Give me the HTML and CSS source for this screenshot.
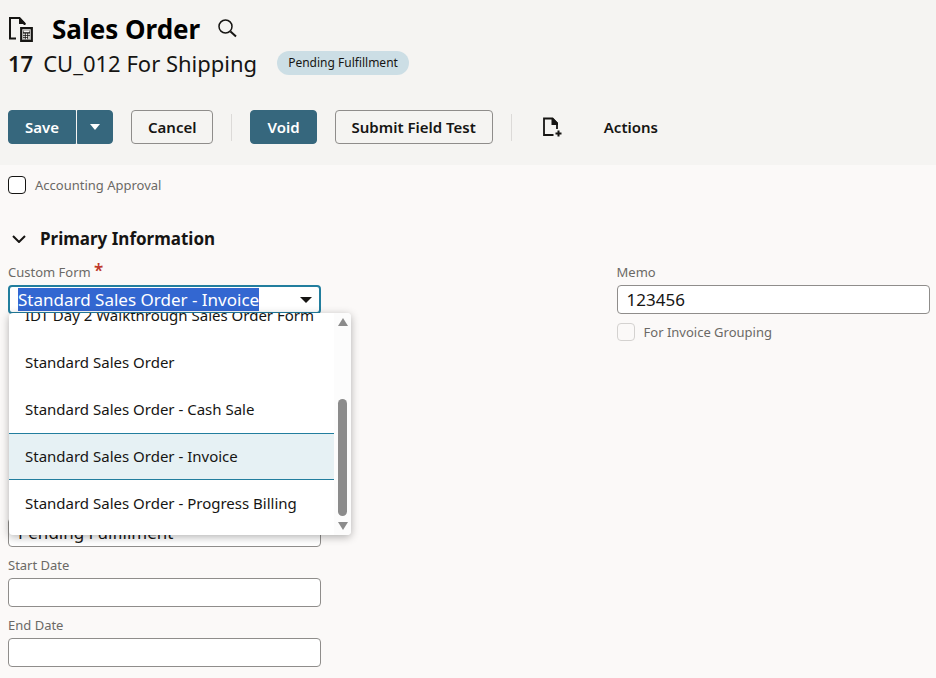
FILE: index.html
```
<!DOCTYPE html>
<html lang="en">
<head>
    <meta charset="UTF-8">
    <meta name="viewport" content="width=device-width, initial-scale=1.0">
    <title>Sales Order</title>
    <link rel="stylesheet" href="styles.css">
</head>
<body>
    <header class="page-header">
        <div class="title-row">
            <svg class="record-icon" width="26" height="28" viewBox="0 0 26 28" aria-hidden="true">
                <path d="M8 23.500H2V3h9.500l5 5.500V10" fill="none" stroke="#161513" stroke-width="2"/>
                <path d="M11 2v7h7z" fill="#161513"/>
                <path d="M13.200 13.200h10.600v12.600H13.200z" fill="none" stroke="#161513" stroke-width="2.200"/>
                <path d="M15 15.500h7v9h-7z" fill="#161513"/>
                <path d="M15.500 15.500h6v1.800h-6zM15.200 18.500h1.600v1.400h-1.600zM17.700 18.500h1.600v1.400h-1.600zM20.200 18.500h1.600v1.400h-1.600zM15.200 20.800h1.600v1.400h-1.600zM17.700 20.800h1.600v1.400h-1.600zM20.200 20.800h1.600v3.400h-1.600zM15.200 23h1.600v1.300h-1.600zM17.700 23h1.600v1.300h-1.600z" fill="#f5f4f2"/>
            </svg>
            <h1>Sales Order</h1>
            <button type="button" class="icon-button" aria-label="Search">
                <svg width="20" height="20" viewBox="0 0 20 20" fill="none" stroke="#161513">
                    <circle cx="7.500" cy="7.500" r="6.500" stroke-width="1.500"/>
                    <path d="M12.500 12.500l5.500 5" stroke-width="2"/>
                </svg>
            </button>
        </div>
        <div class="subtitle-row">
            <span class="record-number">17</span>
            <span class="record-name">CU_012 For Shipping</span>
            <span class="status-badge">Pending Fulfillment</span>
        </div>
        <div class="toolbar">
            <div class="split-button">
                <button type="button" class="btn btn-primary">Save</button>
                <button type="button" class="btn btn-primary btn-arrow" aria-label="More save options">
                    <svg width="10" height="6" viewBox="0 0 10 6"><path d="M0 0h10L5 6z" fill="#fff"/></svg>
                </button>
            </div>
            <button type="button" class="btn">Cancel</button>
            <span class="divider"></span>
            <button type="button" class="btn btn-primary">Void</button>
            <button type="button" class="btn">Submit Field Test</button>
            <span class="divider"></span>
            <button type="button" class="btn btn-plain" aria-label="Create new">
                <svg width="20" height="20" viewBox="0 0 20 20">
                    <path d="M11.500 18H2V1.500h8.500L15 6v6" fill="none" stroke="#161513" stroke-width="1.800"/>
                    <path d="M9.500 1h1.500l5 5v2H9.500z" fill="#161513"/>
                    <path d="M16.500 13.500v6M13.500 16.500h6" stroke="#161513" stroke-width="2"/>
                </svg>
            </button>
            <button type="button" class="btn btn-plain">Actions</button>
        </div>
    </header>

    <main>
        <div class="check-row">
            <input type="checkbox" id="accounting-approval">
            <label for="accounting-approval">Accounting Approval</label>
        </div>

        <h2>
            <svg width="14" height="8" viewBox="0 0 14 8" aria-hidden="true">
                <path d="M1 1l6 6 6-6" fill="none" stroke="#161513" stroke-width="2"/>
            </svg>
            Primary Information
        </h2>

        <div class="form-columns">
            <div class="form-column">
                <div class="field custom-form">
                    <label for="custom-form">Custom Form <span class="required">*</span></label>
                    <div class="combo">
                        <input type="text" id="custom-form" role="combobox" aria-expanded="true" aria-controls="custom-form-list" value="Standard Sales Order - Invoice">
                        <svg width="12" height="6" viewBox="0 0 12 6"><path d="M0 0h12L6 6z" fill="#161513"/></svg>
                    </div>
                    <div class="dropdown">
                        <div class="dropdown-view">
                            <select id="custom-form-list" size="5" aria-label="Custom Form">
                                <option>IDT Day 2 Walkthrough Sales Order Form</option>
                                <option>Standard Sales Order</option>
                                <option>Standard Sales Order - Cash Sale</option>
                                <option selected>Standard Sales Order - Invoice</option>
                                <option>Standard Sales Order - Progress Billing</option>
                            </select>
                        </div>
                        <div class="scrollbar">
                            <svg width="10" height="8" viewBox="0 0 10 8"><path d="M5 0l5 8H0z" fill="#8b8b8b"/></svg>
                            <div class="scrollbar-thumb"></div>
                            <svg width="10" height="8" viewBox="0 0 10 8"><path d="M0 0h10L5 8z" fill="#8b8b8b"/></svg>
                        </div>
                    </div>
                </div>
                <div class="field">
                    <input type="text" aria-label="Status" value="Pending Fulfillment">
                </div>
                <div class="field">
                    <label for="start-date">Start Date</label>
                    <input type="text" id="start-date">
                </div>
                <div class="field">
                    <label for="end-date">End Date</label>
                    <input type="text" id="end-date">
                </div>
            </div>

            <div class="form-column">
                <div class="field">
                    <label for="memo">Memo</label>
                    <input type="text" id="memo" value="123456">
                </div>
                <div class="check-row">
                    <input type="checkbox" id="invoice-grouping" disabled>
                    <label for="invoice-grouping">For Invoice Grouping</label>
                </div>
            </div>
        </div>
    </main>

    <script>
        // The form list opens with its current value selected
        const customForm = document.getElementById('custom-form');
        customForm.focus();
        customForm.select();
    </script>
</body>
</html>
```
FILE: styles.css
```
:root {
    --teal: #36677d;
    --focus: #227e9e;
    --text: #161513;
    --label: #6b6966;
    --border: #8f8d8b;
    --header-bg: #f5f4f2;
    --page-bg: #fbf9f8;
}

* {
    box-sizing: border-box;
}

body {
    margin: 0;
    background-color: var(--page-bg);
    color: var(--text);
    font-family: "Noto Sans", "Open Sans", sans-serif;
    font-size: 15px;
}

button,
input,
select {
    font: inherit;
    color: inherit;
}

h1,
h2 {
    margin: 0;
}

.page-header {
    background-color: var(--header-bg);
    padding: 12px 8px 21px;
}

.title-row,
.subtitle-row,
.toolbar,
.check-row {
    display: flex;
    align-items: center;
}

.title-row {
    height: 34px;
}

h1 {
    margin: 0 18px;
    font-size: 26px;
    line-height: 34px;
    color: #000;
}

.icon-button {
    display: flex;
    padding: 0;
    border: 0;
    background: none;
}

.subtitle-row {
    height: 34px;
    font-size: 22px;
    line-height: 34px;
}

.record-number {
    margin-right: 10px;
    font-weight: 600;
}

.record-name {
    margin-right: 20px;
}

.status-badge {
    padding: 0 11px;
    border-radius: 12px;
    background-color: #ccdee5;
    font-size: 12px;
    line-height: 24px;
}

.toolbar {
    margin-top: 30px;
    gap: 18px;
}

.btn {
    display: flex;
    align-items: center;
    height: 34px;
    padding: 0 16px;
    border: 1px solid var(--border);
    border-radius: 4px;
    background: none;
    font-weight: 600;
    font-size: 15px;
    white-space: nowrap;
}

.btn-primary {
    border-color: var(--teal);
    background-color: var(--teal);
    color: #fff;
}

.btn-plain {
    border-color: transparent;
    padding: 0 11px;
}

.split-button {
    display: flex;
    gap: 1px;
}

.split-button .btn:first-child {
    border-radius: 4px 0 0 4px;
}

.split-button .btn-arrow {
    padding: 0 12px;
    border-radius: 0 4px 4px 0;
}

.divider {
    width: 1px;
    height: 27px;
    background-color: #dcdad8;
}

main {
    padding: 10px 6px 10px 8px;
}

label {
    color: var(--label);
    font-size: 13px;
    line-height: 20px;
}

.check-row {
    gap: 9px;
}

input[type="checkbox"] {
    appearance: none;
    width: 18px;
    height: 18px;
    margin: 0;
    border: 1px solid var(--text);
    border-radius: 4px;
    background-color: #fff;
}

input[type="checkbox"]:disabled {
    border-color: #d4d2d0;
    background-color: var(--page-bg);
}

h2 {
    display: flex;
    align-items: center;
    gap: 14px;
    margin: 32px 0 11px;
    padding-left: 4px;
    font-size: 17px;
    line-height: 24px;
}

.form-columns {
    display: flex;
    justify-content: space-between;
}

.form-column {
    display: flex;
    flex-direction: column;
    gap: 8px;
    width: 34%;
}

.field {
    display: flex;
    flex-direction: column;
    gap: 3px;
}

.field input {
    width: 100%;
    height: 29px;
    padding: 0 9px;
    border: 1px solid var(--border);
    border-radius: 4px;
    background-color: #fff;
    font-size: 17px;
    outline: none;
}

.custom-form {
    position: relative;
    margin-bottom: 196px;
}

.required {
    color: #c0392b;
    font-size: 17px;
    font-weight: 600;
    line-height: 18px;
}

.combo {
    display: grid;
    align-items: center;
}

.combo input,
.combo svg {
    grid-area: 1 / 1;
}

.combo input {
    border: 2px solid var(--focus);
    padding: 0 8px;
}

.combo input::selection {
    background-color: #3367d1;
    color: #fff;
}

.combo svg {
    justify-self: end;
    margin-right: 9px;
}

/* Open option list over the fields below */
.dropdown {
    position: absolute;
    top: 51px;
    left: 1px;
    z-index: 1;
    display: flex;
    width: 342px;
    height: 222px;
    border-radius: 4px;
    background-color: #fff;
    box-shadow: 0 2px 8px rgba(0, 0, 0, 0.3);
    overflow: hidden;
}

.dropdown-view {
    flex: 1;
    display: flex;
    flex-direction: column;
    justify-content: flex-end;
    padding-bottom: 8px;
    overflow: hidden;
}

.dropdown select {
    flex-shrink: 0;
    width: 100%;
    height: 235px;
    padding: 0;
    border: 0;
    background: none;
    font-size: 15px;
    outline: none;
    overflow: hidden;
}

.dropdown option {
    height: 47px;
    padding: 13px 16px;
}

.dropdown option:checked {
    background: linear-gradient(#e6f1f4, #e6f1f4);
    box-shadow: inset 0 1px #227e9e, inset 0 -1px #227e9e;
    color: var(--text);
}

.scrollbar {
    display: flex;
    flex-direction: column;
    align-items: center;
    gap: 6px;
    width: 17px;
    padding: 5px 0;
    background-color: #fcfcfc;
}

.scrollbar-thumb {
    width: 9px;
    height: 117px;
    margin-top: auto;
    border-radius: 5px;
    background-color: #8b8b8b;
}
```
